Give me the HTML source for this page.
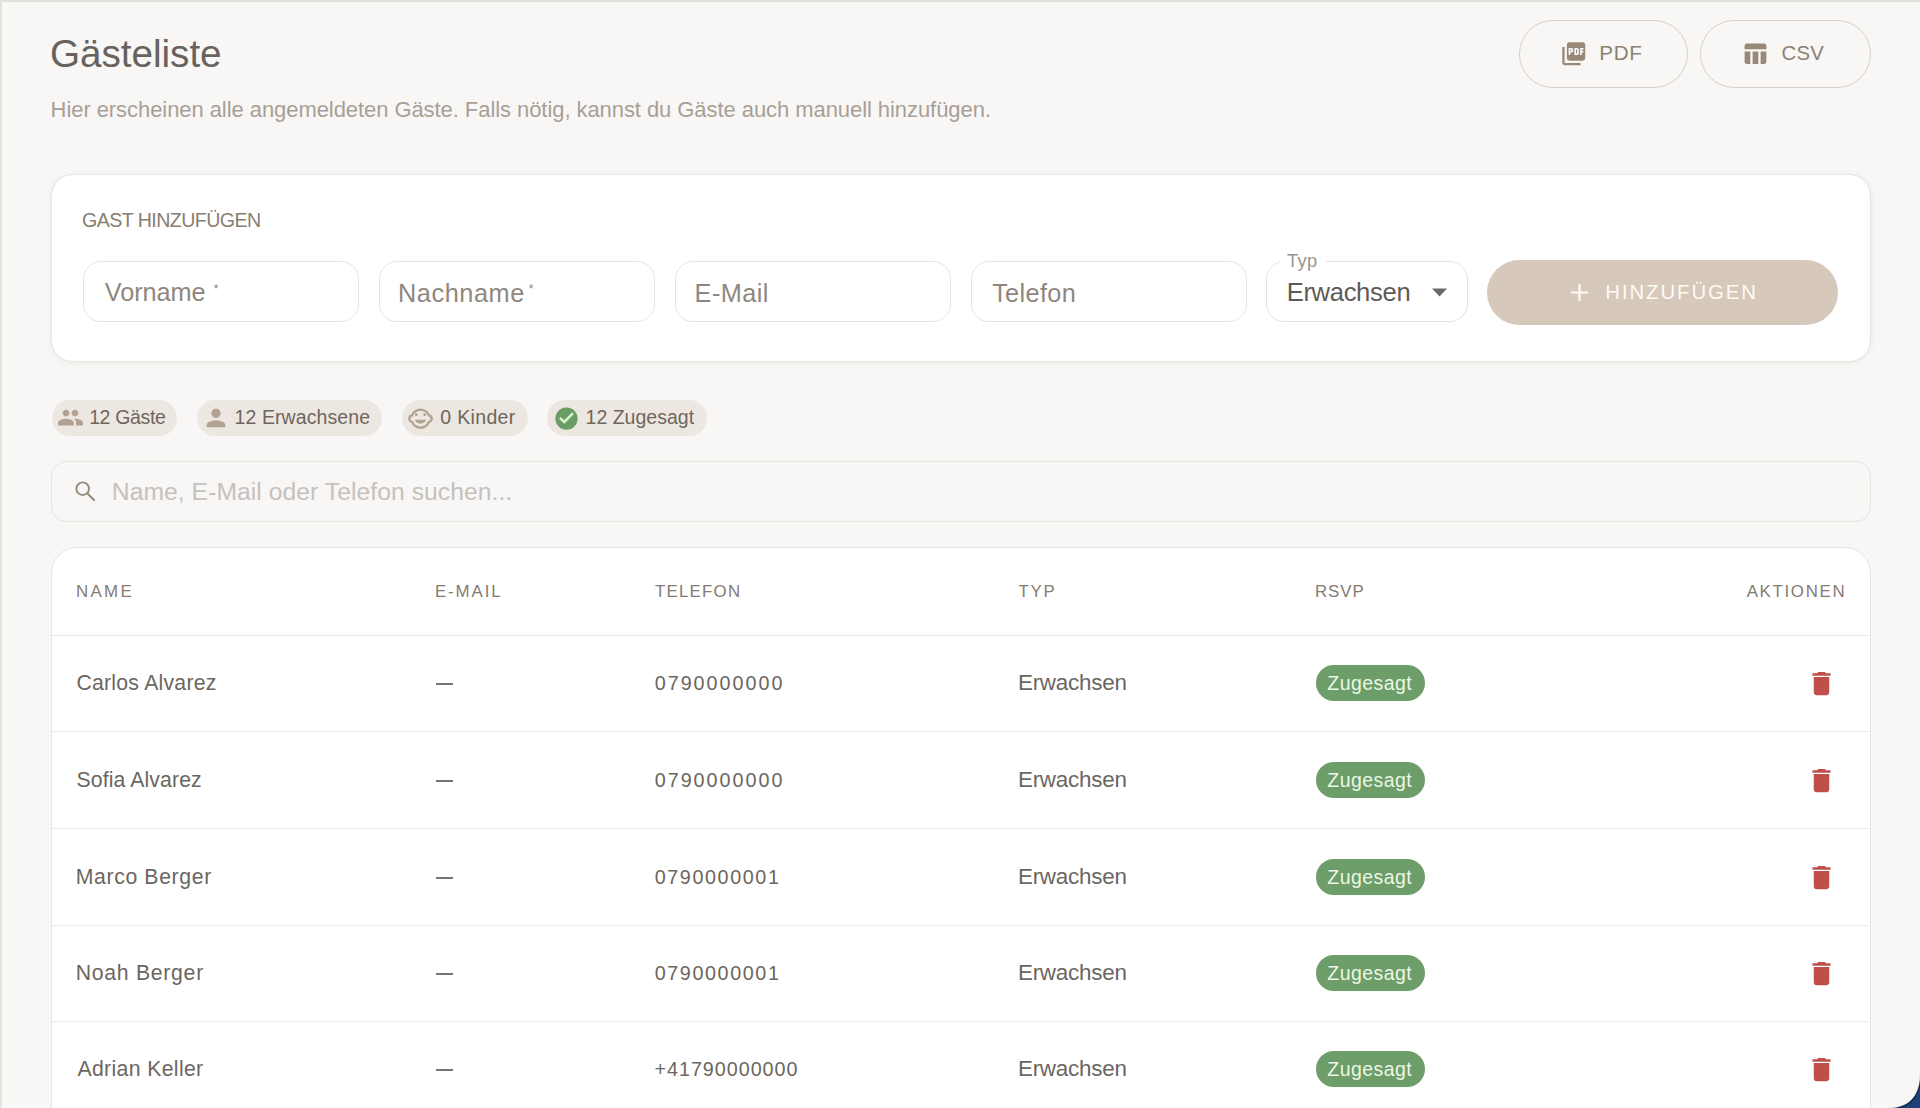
<!DOCTYPE html>
<html><head><meta charset="utf-8">
<style>
*{box-sizing:border-box;margin:0;padding:0}
html,body{width:1920px;height:1108px;overflow:hidden;background:#1c4079}
body{font-family:"Liberation Sans",sans-serif;position:relative}
#win{position:absolute;left:0;top:0;width:1920px;height:1108px;background:#f8f7f5;overflow:hidden}
.t{position:absolute;line-height:1;white-space:nowrap}
.b{position:absolute}
</style></head><body>
<div id="win">
<div class="b" style="left:0;top:0;width:1920px;height:2px;background:#e3e1dd"></div>
<div class="b" style="left:0;top:0;width:1.5px;height:1108px;background:#e4e2df"></div>
<div class="t" style="left:50.07px;top:34.91px;font-size:38.69px;letter-spacing:-0.045px;color:#67625d;">Gästeliste</div>
<div class="t" style="left:50.59px;top:98.50px;font-size:22.00px;letter-spacing:-0.067px;color:#a89f96;">Hier erscheinen alle angemeldeten Gäste. Falls nötig, kannst du Gäste auch manuell hinzufügen.</div>
<div class="b" style="left:1518.5px;top:20px;width:169px;height:67.5px;border:1.7px solid #d5cfc8;border-radius:34px"></div>
<svg class="b" style="left:1559.5px;top:39.5px" width="27.5" height="27.5" viewBox="0 0 24 24" fill="#978878"><path d="M20 2H8c-1.1 0-2 .9-2 2v12c0 1.1.9 2 2 2h12c1.1 0 2-.9 2-2V4c0-1.1-.9-2-2-2zm-8.5 7.5c0 .83-.67 1.5-1.5 1.5H9v2H7.5V7H10c.83 0 1.5.67 1.5 1.5v1zm5 2c0 .83-.67 1.5-1.5 1.5h-2.5V7H15c.83 0 1.5.67 1.5 1.5v3zm4-3H19v1h1.5V11H19v2h-1.5V7h3v1.5zM9 9.5h1v-1H9v1zM4 6H2v14c0 1.1.9 2 2 2h14v-2H4V6zm10 5.5h1v-3h-1v3z"/></svg>
<div class="t" style="left:1599.30px;top:42.84px;font-size:20.65px;letter-spacing:0.611px;color:#8d8174;">PDF</div>
<div class="b" style="left:1700px;top:20px;width:171px;height:67.5px;border:1.7px solid #d5cfc8;border-radius:34px"></div>
<svg class="b" style="left:1741.4px;top:40px" width="27.8" height="27.5" viewBox="0 0 24 24" fill="#978878"><path d="M10 10.02h5V21h-5zM17 21h3c1.1 0 2-.9 2-2v-9h-5v11zm3-18H5c-1.1 0-2 .9-2 2v3h19V5c0-1.1-.9-2-2-2zM3 19c0 1.1.9 2 2 2h3V10H3v9z"/></svg>
<div class="t" style="left:1781.48px;top:42.89px;font-size:20.36px;letter-spacing:0.261px;color:#8d8174;">CSV</div>
<div class="b" style="left:51px;top:173.8px;width:1819.5px;height:188.2px;background:#fff;border:1.2px solid #e7e5e2;border-radius:22px;box-shadow:0 1px 6px rgba(90,80,70,.08)"></div>
<div class="t" style="left:82.02px;top:211.11px;font-size:19.64px;letter-spacing:-0.573px;color:#887e73;">GAST HINZUFÜGEN</div>
<div class="b" style="left:83px;top:261.3px;width:276px;height:60.7px;border:1.6px solid #e5e4e1;border-radius:18px;background:#fff"></div>
<div class="b" style="left:379px;top:261.3px;width:276px;height:60.7px;border:1.6px solid #e5e4e1;border-radius:18px;background:#fff"></div>
<div class="b" style="left:675px;top:261.3px;width:276px;height:60.7px;border:1.6px solid #e5e4e1;border-radius:18px;background:#fff"></div>
<div class="b" style="left:971px;top:261.3px;width:276px;height:60.7px;border:1.6px solid #e5e4e1;border-radius:18px;background:#fff"></div>
<div class="t" style="left:104.87px;top:280.29px;font-size:25.31px;letter-spacing:-0.082px;color:#8f877e;">Vorname</div>
<div class="t" style="left:213.79px;top:282.60px;font-size:12.00px;letter-spacing:0.000px;color:#8f877e;">*</div>
<div class="t" style="left:397.91px;top:280.79px;font-size:25.31px;letter-spacing:0.585px;color:#8f877e;">Nachname</div>
<div class="t" style="left:528.79px;top:282.60px;font-size:12.00px;letter-spacing:0.000px;color:#8f877e;">*</div>
<div class="t" style="left:694.61px;top:280.79px;font-size:25.31px;letter-spacing:0.409px;color:#8f877e;">E-Mail</div>
<div class="t" style="left:992.13px;top:280.79px;font-size:25.31px;letter-spacing:0.341px;color:#8f877e;">Telefon</div>
<div class="b" style="left:1266px;top:261.3px;width:202px;height:60.7px;border:1.6px solid #e5e4e1;border-radius:18px;background:#fff"></div>
<div class="b" style="left:1280px;top:255px;width:46px;height:12px;background:#fff"></div>
<div class="t" style="left:1287.09px;top:252.22px;font-size:18.33px;letter-spacing:0.315px;color:#9a938b;">Typ</div>
<div class="t" style="left:1286.69px;top:279.64px;font-size:25.60px;letter-spacing:-0.335px;color:#5f5a55;">Erwachsen</div>
<svg class="b" style="left:1431px;top:288px" width="17" height="9" viewBox="0 0 17 9"><path d="M1 .5h15L8.5 8.5z" fill="#6c6966"/></svg>
<div class="b" style="left:1487px;top:260px;width:351px;height:64.5px;border-radius:33px;background:#d6c8ba"></div>
<svg class="b" style="left:1571px;top:283.5px" width="17" height="17" viewBox="0 0 17 17"><path d="M8.5 0v17M0 8.5h17" stroke="#fffaf4" stroke-width="2.2"/></svg>
<div class="t" style="left:1605.32px;top:282.09px;font-size:20.36px;letter-spacing:1.908px;color:#fffaf4;">HINZUFÜGEN</div>
<div class="b" style="left:51.5px;top:400px;width:125px;height:36px;border-radius:18px;background:#ede7e1"></div>
<svg class="b" style="left:56.7px;top:404.4px" width="27" height="27" viewBox="0 0 24 24" fill="#b1a291"><path d="M16 11c1.66 0 2.99-1.34 2.99-3S17.66 5 16 5c-1.66 0-3 1.34-3 3s1.34 3 3 3zm-8 0c1.66 0 2.99-1.34 2.99-3S9.66 5 8 5C6.34 5 5 6.34 5 8s1.34 3 3 3zm0 2c-2.33 0-7 1.17-7 3.5V19h14v-2.5c0-2.33-4.67-3.5-7-3.5zm8 0c-.29 0-.62.02-.97.05 1.16.84 1.97 1.97 1.97 3.45V19h6v-2.5c0-2.33-4.67-3.5-7-3.5z"/></svg>
<div class="t" style="left:89.14px;top:408.03px;font-size:19.49px;letter-spacing:-0.342px;color:#6e665e;">12 Gäste</div>
<div class="b" style="left:196.5px;top:400px;width:185px;height:36px;border-radius:18px;background:#ede7e1"></div>
<svg class="b" style="left:202px;top:404.2px" width="28" height="28" viewBox="0 0 24 24" fill="#b1a291"><path d="M12 12c2.21 0 4-1.79 4-4s-1.79-4-4-4-4 1.79-4 4 1.79 4 4 4zm0 2c-2.67 0-8 1.34-8 4v2h16v-2c0-2.66-5.33-4-8-4z"/></svg>
<div class="t" style="left:234.54px;top:408.03px;font-size:19.49px;letter-spacing:0.096px;color:#6e665e;">12 Erwachsene</div>
<div class="b" style="left:401.5px;top:400px;width:126px;height:36px;border-radius:18px;background:#ede7e1"></div>
<svg class="b" style="left:407px;top:403.5px" width="27" height="27" viewBox="0 0 24 24" fill="#b1a291"><path d="M14.5 9.5a1.25 1.25 0 1 0 2.5 0 1.25 1.25 0 1 0-2.5 0M7 9.5a1.25 1.25 0 1 0 2.5 0 1.25 1.25 0 1 0-2.5 0M12 17.5c2.03 0 3.8-1.11 4.75-2.75.19-.33-.05-.75-.44-.75H7.69c-.38 0-.63.42-.44.75.95 1.64 2.72 2.75 4.75 2.75zm10.94-5.16c-.25-1.51-1.36-2.74-2.81-3.17-.53-1.12-1.28-2.1-2.19-2.91C16.36 4.85 14.28 4 12 4s-4.36.85-5.94 2.26c-.92.81-1.67 1.8-2.19 2.91-1.45.43-2.56 1.65-2.81 3.17-.04.21-.06.43-.06.66 0 .23.02.45.06.66.25 1.51 1.36 2.74 2.81 3.17.52 1.1 1.27 2.08 2.17 2.89C7.62 21.14 9.71 22 12 22s4.38-.86 5.97-2.28c.9-.8 1.650-1.79 2.17-2.89 1.44-.43 2.55-1.65 2.8-3.17.04-.21.06-.43.06-.66 0-.23-.02-.45-.06-.66zM19 15c-.1 0-.19-.02-.29-.03-.2.67-.49 1.29-.86 1.860C16.6 18.74 14.45 20 12 20s-4.6-1.26-5.850-3.17c-.37-.57-.66-1.19-.86-1.86-.1.01-.19.03-.29.03-1.1 0-2-.9-2-2s.9-2 2-2c.1 0 .19.02.29.03.2-.67.49-1.29.86-1.86C7.4 7.26 9.55 6 12 6s4.6 1.26 5.85 3.17c.37.57.66 1.19.86 1.86.1-.01.19-.03.29-.03 1.1 0 2 .9 2 2s-.9 2-2 2z"/></svg>
<div class="t" style="left:440.22px;top:408.03px;font-size:19.49px;letter-spacing:0.353px;color:#6e665e;">0 Kinder</div>
<div class="b" style="left:547px;top:400px;width:160px;height:36px;border-radius:18px;background:#ede7e1"></div>
<svg class="b" style="left:552.5px;top:404.5px" width="27" height="27" viewBox="0 0 24 24"><circle cx="12" cy="12.1" r="9.9" fill="#6b9c66"/><path d="M6 11.5L10.1 15.1L17.8 7.2" stroke="#d8f1cf" stroke-width="2.2" fill="none"/></svg>
<div class="t" style="left:585.54px;top:408.03px;font-size:19.49px;letter-spacing:0.024px;color:#6e665e;">12 Zugesagt</div>
<div class="b" style="left:51px;top:461.2px;width:1819.5px;height:61px;border:1.8px solid #e6e4e1;border-radius:15px"></div>
<svg class="b" style="left:70px;top:476px" width="30" height="30" viewBox="70 476 30 30"><circle cx="82.7" cy="488.7" r="6.3" fill="none" stroke="#9a8b7c" stroke-width="1.9"/><path d="M87.2 493.2L94 500" stroke="#9a8b7c" stroke-width="2.1" stroke-linecap="round"/></svg>
<div class="t" style="left:111.76px;top:479.78px;font-size:24.73px;letter-spacing:0.032px;color:#c6c1bc;">Name, E-Mail oder Telefon suchen...</div>
<div class="b" style="left:51px;top:547px;width:1819.5px;height:700px;background:#fff;border:1.3px solid #e8e4e1;border-radius:26px"></div>
<div class="t" style="left:76.11px;top:584.06px;font-size:16.87px;letter-spacing:2.282px;color:#847b72;">NAME</div>
<div class="t" style="left:434.91px;top:584.06px;font-size:16.87px;letter-spacing:1.922px;color:#847b72;">E-MAIL</div>
<div class="t" style="left:655.02px;top:584.06px;font-size:16.87px;letter-spacing:1.224px;color:#847b72;">TELEFON</div>
<div class="t" style="left:1018.62px;top:584.06px;font-size:16.87px;letter-spacing:1.624px;color:#847b72;">TYP</div>
<div class="t" style="left:1314.91px;top:584.06px;font-size:16.87px;letter-spacing:1.014px;color:#847b72;">RSVP</div>
<div class="t" style="left:1746.66px;top:584.06px;font-size:16.87px;letter-spacing:1.682px;color:#847b72;">AKTIONEN</div>
<div class="b" style="left:52px;top:634.5px;width:1817px;height:1.2px;background:#ebe7e3"></div>
<div class="t" style="left:76.44px;top:672.75px;font-size:21.24px;letter-spacing:0.233px;color:#6b6661;">Carlos Alvarez</div>
<div class="b" style="left:436.3px;top:683.4px;width:17px;height:1.5px;background:#767371"></div>
<div class="t" style="left:654.71px;top:673.99px;font-size:19.78px;letter-spacing:1.972px;color:#6b6661;">0790000000</div>
<div class="t" style="left:1017.95px;top:671.76px;font-size:22.40px;letter-spacing:-0.227px;color:#6b6661;">Erwachsen</div>
<div class="b" style="left:1316px;top:664.5px;width:109px;height:36.5px;border-radius:18.25px;background:#6d9d68"></div>
<div class="t" style="left:1327.37px;top:674.23px;font-size:19.49px;letter-spacing:0.443px;color:#eaf7e4;">Zugesagt</div>
<svg class="b" style="left:1806.3px;top:668.1px" width="31" height="31" viewBox="0 0 24 24" fill="#bf4f4b"><path d="M6 19c0 1.1.9 2 2 2h8c1.1 0 2-.9 2-2V7H6v12zM19 4h-3.5l-1-1h-5l-1 1H5v2h14V4z"/></svg>
<div class="b" style="left:52px;top:731px;width:1817px;height:1px;background:#eeebe8"></div>
<div class="t" style="left:76.54px;top:769.75px;font-size:21.24px;letter-spacing:0.099px;color:#6b6661;">Sofia Alvarez</div>
<div class="b" style="left:436.3px;top:780.4px;width:17px;height:1.5px;background:#767371"></div>
<div class="t" style="left:654.71px;top:770.99px;font-size:19.78px;letter-spacing:1.972px;color:#6b6661;">0790000000</div>
<div class="t" style="left:1017.95px;top:768.76px;font-size:22.40px;letter-spacing:-0.227px;color:#6b6661;">Erwachsen</div>
<div class="b" style="left:1316px;top:761.5px;width:109px;height:36.5px;border-radius:18.25px;background:#6d9d68"></div>
<div class="t" style="left:1327.37px;top:771.23px;font-size:19.49px;letter-spacing:0.443px;color:#eaf7e4;">Zugesagt</div>
<svg class="b" style="left:1806.3px;top:765.1px" width="31" height="31" viewBox="0 0 24 24" fill="#bf4f4b"><path d="M6 19c0 1.1.9 2 2 2h8c1.1 0 2-.9 2-2V7H6v12zM19 4h-3.5l-1-1h-5l-1 1H5v2h14V4z"/></svg>
<div class="b" style="left:52px;top:828px;width:1817px;height:1px;background:#eeebe8"></div>
<div class="t" style="left:75.75px;top:866.75px;font-size:21.24px;letter-spacing:0.621px;color:#6b6661;">Marco Berger</div>
<div class="b" style="left:436.3px;top:877.4px;width:17px;height:1.5px;background:#767371"></div>
<div class="t" style="left:654.71px;top:867.99px;font-size:19.78px;letter-spacing:1.583px;color:#6b6661;">0790000001</div>
<div class="t" style="left:1017.95px;top:865.76px;font-size:22.40px;letter-spacing:-0.227px;color:#6b6661;">Erwachsen</div>
<div class="b" style="left:1316px;top:858.5px;width:109px;height:36.5px;border-radius:18.25px;background:#6d9d68"></div>
<div class="t" style="left:1327.37px;top:868.23px;font-size:19.49px;letter-spacing:0.443px;color:#eaf7e4;">Zugesagt</div>
<svg class="b" style="left:1806.3px;top:862.1px" width="31" height="31" viewBox="0 0 24 24" fill="#bf4f4b"><path d="M6 19c0 1.1.9 2 2 2h8c1.1 0 2-.9 2-2V7H6v12zM19 4h-3.5l-1-1h-5l-1 1H5v2h14V4z"/></svg>
<div class="b" style="left:52px;top:925px;width:1817px;height:1px;background:#eeebe8"></div>
<div class="t" style="left:75.75px;top:962.75px;font-size:21.24px;letter-spacing:0.706px;color:#6b6661;">Noah Berger</div>
<div class="b" style="left:436.3px;top:973.4px;width:17px;height:1.5px;background:#767371"></div>
<div class="t" style="left:654.71px;top:963.99px;font-size:19.78px;letter-spacing:1.583px;color:#6b6661;">0790000001</div>
<div class="t" style="left:1017.95px;top:961.76px;font-size:22.40px;letter-spacing:-0.227px;color:#6b6661;">Erwachsen</div>
<div class="b" style="left:1316px;top:954.5px;width:109px;height:36.5px;border-radius:18.25px;background:#6d9d68"></div>
<div class="t" style="left:1327.37px;top:964.23px;font-size:19.49px;letter-spacing:0.443px;color:#eaf7e4;">Zugesagt</div>
<svg class="b" style="left:1806.3px;top:958.1px" width="31" height="31" viewBox="0 0 24 24" fill="#bf4f4b"><path d="M6 19c0 1.1.9 2 2 2h8c1.1 0 2-.9 2-2V7H6v12zM19 4h-3.5l-1-1h-5l-1 1H5v2h14V4z"/></svg>
<div class="b" style="left:52px;top:1021px;width:1817px;height:1px;background:#eeebe8"></div>
<div class="t" style="left:77.45px;top:1058.75px;font-size:21.24px;letter-spacing:0.349px;color:#6b6661;">Adrian Keller</div>
<div class="b" style="left:436.3px;top:1069.4px;width:17px;height:1.5px;background:#767371"></div>
<div class="t" style="left:654.56px;top:1059.99px;font-size:19.78px;letter-spacing:0.949px;color:#6b6661;">+41790000000</div>
<div class="t" style="left:1017.95px;top:1057.76px;font-size:22.40px;letter-spacing:-0.227px;color:#6b6661;">Erwachsen</div>
<div class="b" style="left:1316px;top:1050.5px;width:109px;height:36.5px;border-radius:18.25px;background:#6d9d68"></div>
<div class="t" style="left:1327.37px;top:1060.23px;font-size:19.49px;letter-spacing:0.443px;color:#eaf7e4;">Zugesagt</div>
<svg class="b" style="left:1806.3px;top:1054.1px" width="31" height="31" viewBox="0 0 24 24" fill="#bf4f4b"><path d="M6 19c0 1.1.9 2 2 2h8c1.1 0 2-.9 2-2V7H6v12zM19 4h-3.5l-1-1h-5l-1 1H5v2h14V4z"/></svg>
<svg class="b" style="left:1870px;top:1060px" width="50" height="48" viewBox="0 0 50 48"><path d="M50.00 4.00 L49.98 9.08 L49.92 12.06 L49.81 14.56 L49.66 16.77 L49.47 18.80 L49.24 20.68 L48.97 22.45 L48.65 24.11 L48.29 25.69 L47.89 27.19 L47.45 28.62 L46.96 29.99 L46.44 31.30 L45.87 32.54 L45.25 33.74 L44.60 34.87 L43.90 35.96 L43.16 37.00 L42.37 37.98 L41.54 38.92 L40.67 39.81 L39.75 40.66 L38.78 41.45 L37.77 42.20 L36.71 42.91 L35.60 43.56 L34.44 44.18 L33.22 44.74 L31.95 45.26 L30.61 45.74 L29.21 46.17 L27.74 46.55 L26.19 46.89 L24.54 47.19 L22.79 47.43 L20.90 47.64 L18.84 47.80 L16.51 47.91 L13.74 47.98 L9.00 48.00 L50 48 L50 0 Z" fill="#1c4079"/><path d="M50.00 4.00 L49.98 9.08 L49.92 12.06 L49.81 14.56 L49.66 16.77 L49.47 18.80 L49.24 20.68 L48.97 22.45 L48.65 24.11 L48.29 25.69 L47.89 27.19 L47.45 28.62 L46.96 29.99 L46.44 31.30 L45.87 32.54 L45.25 33.74 L44.60 34.87 L43.90 35.96 L43.16 37.00 L42.37 37.98 L41.54 38.92 L40.67 39.81 L39.75 40.66 L38.78 41.45 L37.77 42.20 L36.71 42.91 L35.60 43.56 L34.44 44.18 L33.22 44.74 L31.95 45.26 L30.61 45.74 L29.21 46.17 L27.74 46.55 L26.19 46.89 L24.54 47.19 L22.79 47.43 L20.90 47.64 L18.84 47.80 L16.51 47.91 L13.74 47.98 L9.00 48.00" fill="none" stroke="#14284a" stroke-width="1.6" transform="translate(0.9,0.9)"/><path d="M50.00 4.00 L49.98 9.08 L49.92 12.06 L49.81 14.56 L49.66 16.77 L49.47 18.80 L49.24 20.68 L48.97 22.45 L48.65 24.11 L48.29 25.69 L47.89 27.19 L47.45 28.62 L46.96 29.99 L46.44 31.30 L45.87 32.54 L45.25 33.74 L44.60 34.87 L43.90 35.96 L43.16 37.00 L42.37 37.98 L41.54 38.92 L40.67 39.81 L39.75 40.66 L38.78 41.45 L37.77 42.20 L36.71 42.91 L35.60 43.56 L34.44 44.18 L33.22 44.74 L31.95 45.26 L30.61 45.74 L29.21 46.17 L27.74 46.55 L26.19 46.89 L24.54 47.19 L22.79 47.43 L20.90 47.64 L18.84 47.80 L16.51 47.91 L13.74 47.98 L9.00 48.00" fill="none" stroke="#ffffff" stroke-width="1.2" opacity="0.8"/></svg>
</div>
</body></html>
